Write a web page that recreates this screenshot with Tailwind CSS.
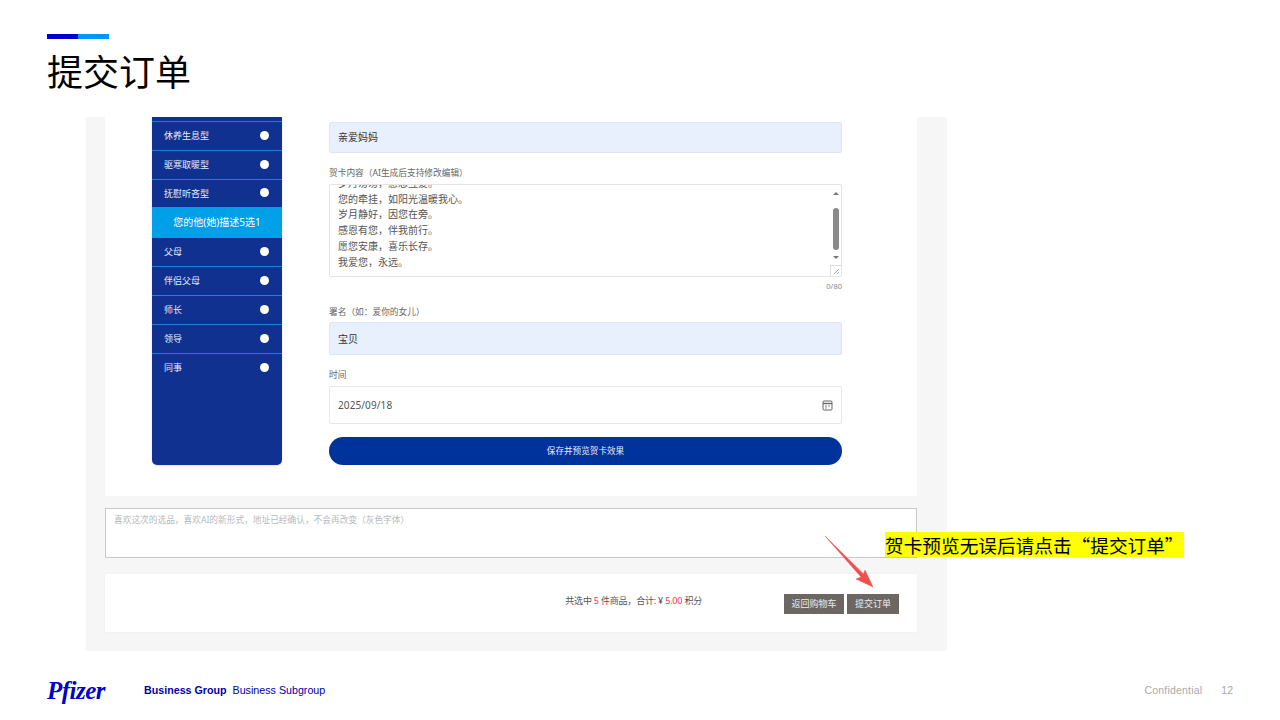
<!DOCTYPE html>
<html lang="zh-CN">

<head>
  <meta charset="UTF-8" />
  <title>提交订单</title>
  <script src="https://cdn.jsdelivr.net/npm/@tailwindcss/browser@4"></script>
</head>

<body class="bg-white">
  <div class="relative w-[1280px] h-[720px] overflow-hidden bg-white font-['Noto_Sans','Noto_Sans_CJK_SC',sans-serif]">

    <!-- slide header -->
    <header class="pt-[34px] pl-[47px] h-[117px]">
      <div class="flex h-[5px] w-[62px]">
        <div class="w-[31px] bg-[#0000c9]"></div>
        <div class="w-[31px] bg-[#0095ff]"></div>
      </div>
      <h1 class="mt-[10px] text-[36px] leading-[50px] text-black font-normal font-['Liberation_Sans','Noto_Sans_CJK_SC',sans-serif]">提交订单</h1>
    </header>

    <!-- screenshot panel -->
    <main class="ml-[86px] w-[861px] h-[534px] bg-[#f6f6f6] pl-[19px] pr-[30px]">
      <section class="flex h-[379px] bg-white pl-[47px]">
        <!-- sidebar -->
        <nav class="w-[130px] h-[348px] bg-[#10318f] rounded-b-[5px] pt-[4px] text-[9px] text-[#e6edfa] shadow-sm">
          <div class="flex items-center justify-between h-[29px] pl-3 pr-[13px] border-t border-[#1d7fe0]"><span>休养生息型</span><span class="-mt-[2px] w-[9px] h-[9px] rounded-full bg-white"></span></div>
          <div class="flex items-center justify-between h-[29px] pl-3 pr-[13px] border-t border-[#1d7fe0]"><span>驱寒取暖型</span><span class="-mt-[2px] w-[9px] h-[9px] rounded-full bg-white"></span></div>
          <div class="flex items-center justify-between h-[28px] pl-3 pr-[13px] border-t border-[#1d7fe0]"><span>抚慰听吝型</span><span class="-mt-[2px] w-[9px] h-[9px] rounded-full bg-white"></span></div>
          <div class="flex items-center justify-center h-[31px] bg-[#00a0e9] text-white text-[10px]">您的他(她)描述5选1</div>
          <div class="flex items-center justify-between h-[28px] pl-3 pr-[13px]"><span>父母</span><span class="-mt-[2px] w-[9px] h-[9px] rounded-full bg-white"></span></div>
          <div class="flex items-center justify-between h-[29px] pl-3 pr-[13px] border-t border-[#1d7fe0]"><span>伴侣父母</span><span class="-mt-[2px] w-[9px] h-[9px] rounded-full bg-white"></span></div>
          <div class="flex items-center justify-between h-[29px] pl-3 pr-[13px] border-t border-[#1d7fe0]"><span>师长</span><span class="-mt-[2px] w-[9px] h-[9px] rounded-full bg-white"></span></div>
          <div class="flex items-center justify-between h-[29px] pl-3 pr-[13px] border-t border-[#1d7fe0]"><span>领导</span><span class="-mt-[2px] w-[9px] h-[9px] rounded-full bg-white"></span></div>
          <div class="flex items-center justify-between h-[29px] pl-3 pr-[13px] border-t border-[#1d7fe0]"><span>同事</span><span class="-mt-[2px] w-[9px] h-[9px] rounded-full bg-white"></span></div>
        </nav>

        <!-- greeting card form -->
        <form class="ml-[47px] w-[513px] pt-[5px] flex flex-col">
          <div class="flex items-center h-[31px] pl-[8px] rounded-[2px] bg-[#e8f0fe] border border-[#e0e5ee] text-[10px] text-[#333]">亲爱妈妈</div>
          <label class="mt-[13px] h-[14px] leading-[14px] text-[8.7px] text-[#666]">贺卡内容（AI生成后支持修改编辑）</label>
          <div class="mt-[4px] flex h-[93px] border border-[#e4e4e4] rounded-[2px] overflow-hidden">
            <div class="flex-1 overflow-hidden pl-[8px] text-[10px] leading-[15.7px] text-[#555]">
              <p class="-mt-[9px]">岁月匆匆，感恩互爱。</p>
              <p>您的牵挂，如阳光温暖我心。</p>
              <p>岁月静好，因您在旁。</p>
              <p>感恩有您，伴我前行。</p>
              <p>愿您安康，喜乐长存。</p>
              <p>我爱您，永远。</p>
            </div>
            <!-- scrollbar and resize grip -->
            <div class="w-[11px] flex flex-col items-center">
              <div class="mt-[7px] w-0 h-0 border-x-[3px] border-x-transparent border-b-[3px] border-b-[#777]"></div>
              <div class="mt-[13px] w-[6px] h-[42px] rounded-full bg-[#8a8a8a]"></div>
              <div class="mt-[6px] w-0 h-0 border-x-[3px] border-x-transparent border-t-[3px] border-t-[#777]"></div>
              <div class="mt-auto w-[11px] h-[11px] border-l border-t border-[#ddd] flex items-center justify-center">
                <svg width="7" height="7" viewBox="0 0 7 7" stroke="#888" stroke-width="0.7"><path d="M1 6 6 1M4 6 6 4" /></svg>
              </div>
            </div>
          </div>
          <p class="mt-[3px] h-[12px] leading-[12px] text-right text-[7.5px] text-[#888]">0/80</p>
          <label class="mt-[13px] h-[14px] leading-[14px] text-[8.7px] text-[#666]">署名（如：爱你的女儿）</label>
          <div class="mt-[3px] flex items-center h-[33px] pl-[8px] pt-[2px] rounded-[2px] bg-[#e8f0fe] border border-[#e0e5ee] text-[10px] text-[#333]">宝贝</div>
          <label class="mt-[13px] h-[14px] leading-[14px] text-[8.7px] text-[#666]">时间</label>
          <div class="mt-[4px] flex items-center justify-between h-[38px] pl-[8px] pr-[8px] rounded-[2px] border border-[#e8e8e8] text-[10px] text-[#555]">
            <span class="tracking-[0.1px]">2025/09/18</span>
            <svg width="11" height="11" viewBox="0 0 11 11" fill="none" stroke="#666"><rect x="1" y="1" width="9" height="9" rx="1" /><path d="M1 3.5h9" stroke-width="1.4" /><path d="M3 6h2M6 6h2M3 8h2" stroke-width="0.8" /></svg>
          </div>
          <button type="button" class="mt-[13px] h-[28px] rounded-full bg-[#00329b] text-[8.6px] text-[#e8eefa]">保存并预览贺卡效果</button>
        </form>
      </section>

      <!-- order note -->
      <div class="mt-[12px] h-[50px] bg-white border border-[#c8c8c8] px-[8px] pt-[4px] text-[8.7px] leading-[14px] text-[#b5bac0]">喜欢这次的选品，喜欢AI的新形式，地址已经确认，不会再改变（灰色字体）</div>

      <!-- order summary -->
      <section class="mt-[16px] flex items-center justify-end h-[58px] bg-white pr-[18px] pt-[1px] shadow-[0_0_3px_rgba(0,0,0,0.04)]">
        <p class="mr-[82px] -mt-[6px] text-[9px] tracking-[-0.2px] text-[#555]">共选中 <span class="text-[#f0324b]">5</span> 件商品，合计: ¥ <span class="text-[#f0324b]">5.00</span> 积分</p>
        <button type="button" class="w-[60px] h-[20px] mt-[1px] bg-[#6d6763] text-[9px] text-[#ececec]">返回购物车</button>
        <button type="button" class="ml-[3px] w-[52px] h-[20px] mt-[1px] bg-[#6d6763] text-[9px] text-[#ececec]">提交订单</button>
      </section>
    </main>

    <!-- slide footer -->
    <footer class="flex items-center h-[31px] mt-[24px] pl-[47px] pr-[47px] font-['Liberation_Sans',sans-serif]">
      <span class="w-[97px] text-[25px] leading-[31px] font-bold italic text-[#0000c9] tracking-[-0.5px] font-['Liberation_Serif',serif]">Pfizer</span>
      <span class="text-[10.7px] font-bold text-[#0000a8]">Business Group</span>
      <span class="ml-[6px] text-[10.7px] text-[#0000a8]">Business Subgroup</span>
      <span class="ml-auto text-[10.5px] tracking-[0.2px] text-[#aaa]">Confidential</span>
      <span class="ml-[19px] text-[10.5px] text-[#aaa]">12</span>
    </footer>

    <!-- annotation over the screenshot -->
    <div class="absolute left-[885px] top-[532px] w-[299px] h-[25px] bg-[#ffff00] text-[18.67px] leading-[25px] text-black whitespace-nowrap font-['Noto_Sans_CJK_SC',sans-serif]">贺卡预览无误后请点击“提交订单”</div>
    <svg class="absolute left-[820px] top-[530px]" width="60" height="62" viewBox="0 0 60 62">
      <path d="M5 6 41 47 36 49 53 57 45 40 43.5 44 Z" fill="#f05050" stroke="#f05050" stroke-width="0.5" stroke-linejoin="round" />
    </svg>
  </div>
</body>

</html>
